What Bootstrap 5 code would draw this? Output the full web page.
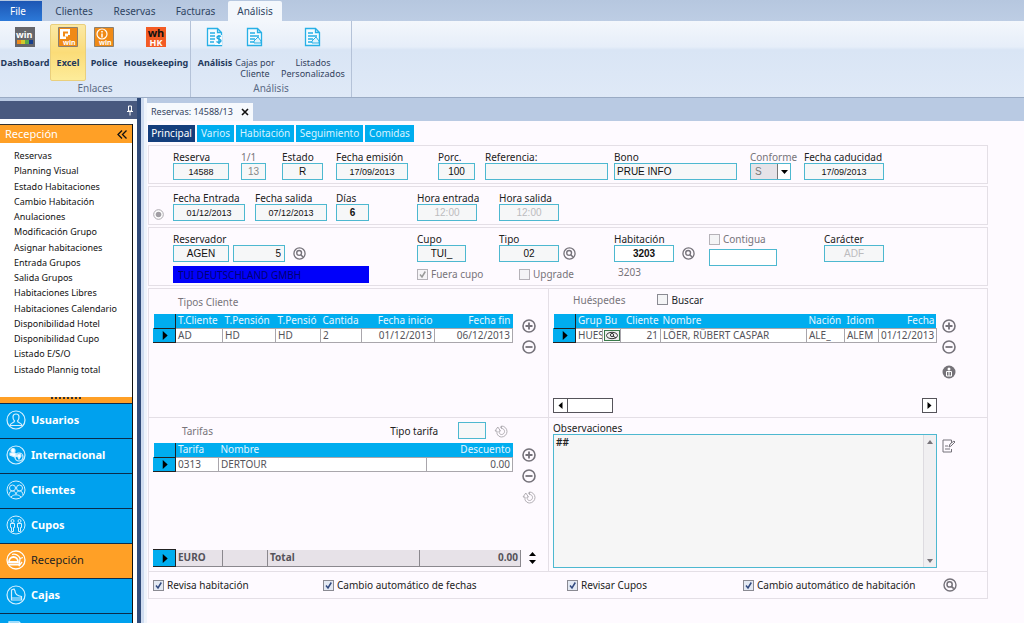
<!DOCTYPE html>
<html lang="es">
<head>
<meta charset="utf-8">
<meta name="viewport" content="width=device-width, initial-scale=1">
<title>Reservas: 14588/13</title>
<link href="https://cdn.jsdelivr.net/npm/bootstrap@5.3.0/dist/css/bootstrap.min.css" rel="stylesheet">
<style>
:root{--ui:"Noto Sans","Open Sans",sans-serif;--cyan:#00adef;--line:#e4dfe6;--edge:#4db8d0}
body{font:10px/12px var(--ui);color:#222;background:#fefaff;height:100vh;overflow:hidden}
button,input,select,textarea{font-family:inherit;border-radius:0}
svg{display:block;flex:none}
/* ribbon */
.menu-strip{background:linear-gradient(#b6c7df,#bdcde4);height:21px;padding-top:1px;flex:none}
.menu-strip .nav-link{padding:0;height:20px;line-height:21px;color:#2f4563;text-align:center;border-radius:0}
.menu-strip .nav-link.file{background:linear-gradient(#1d56b4,#2c79d8);color:#fff;width:42px;padding-right:6px}
.menu-strip .nav-link.active{background:#f3f7fc;border-radius:2px 2px 0 0}
.w-cli{width:64px}.w-res{width:57px}.w-fac{width:65px}.w-ana{width:54px}
.ribbon{background:linear-gradient(#f3f7fc,#e6eef9 34%,#d9e5f5 38%,#dfe9f7);border-bottom:1px solid #9aabc4;height:77px;flex:none}
.rgroup{border-right:1px solid #b4c2d8;padding-top:3px}
.rgroup .cap{color:#5b6b86;height:14px;line-height:14px;text-align:center}
.rbtn{border:1px solid transparent;background:none;padding:2px 0 0;height:57px;color:#33435e;font-size:9px;line-height:11px;white-space:nowrap;display:flex;flex-direction:column;align-items:center;gap:10px}
.rbtn svg{width:20px;height:20px}
.rbtn.strong{font-weight:700;color:#24395b}
.rbtn.hot{background:linear-gradient(#fbe9a5,#fbdc78 50%,#fdec9a);border-color:#e9cf7d;border-radius:2px}
.b36{width:36px}.b40{width:40px}.b50{width:50px}.b68{width:68px}
/* side pane */
.side{width:137px;flex:none;background:#fff}
.side>*{flex:none}
.side-top{background:#48597f;border-top:3px solid #b9cae3;height:21px;padding-right:3px}
.side-in{margin:5px 4px 0 0;border-right:1px solid #111}
.side-head{background:#ffa026;color:#fff;font-size:11px;height:19px;border-top:1px solid #333;padding:0 5px}
.side-head button{border:0;background:none;padding:0}
.links{height:254px;padding:5px 0 20px 14px;font-size:9px;flex-wrap:nowrap}
.links a{color:#111;text-decoration:none;flex:1;line-height:15px}
.grip{height:6px;background:#ffa026;display:flex;justify-content:center;align-items:flex-start}
.grip i{width:30px;height:2px;background:repeating-linear-gradient(90deg,#333 0 2px,#ffa026 2px 4px)}
.mod{border:0;border-top:1px solid #0b2c4c;background:#00a1ee;color:#fff;font-weight:700;font-size:11px;text-align:left;height:35px;width:100%;padding:0 0 2px 6px;display:flex;align-items:center;gap:5px}
.mod.sel{background:#ffa026;color:#222;font-weight:400}
.split{width:10px;flex:none;background:linear-gradient(90deg,#304a78 0 4px,#cfdcf0 4px 7px,#eff4fb 7px)}
/* document */
.doc-strip{background:#b9cae3;height:23px;padding-top:5px}
.doc-tab{background:#f6f9fd;height:18px;width:106px;padding:0 4px;color:#33435e;font-size:9px}
.doc-tab button{border:0;background:none;padding:0}
.page{background:#fefaff}
.ptabs{gap:2px;padding:4px 0 3px}
.ptabs .nav-link{background:var(--cyan);color:#d9f3ff;padding:0;height:17px;line-height:17px;border-radius:0;text-align:center}
.ptabs .nav-link.active{background:#143e7c;color:#fff}
.t1{width:47px}.t2{width:37px}.t3{width:58px}.t4{width:67px}.t5{width:49px}
.form-wrap{margin-right:36px;padding-left:1px}
.pane{border:1px solid var(--line);margin-bottom:2px;display:grid}
.pane label,.pane .lab{white-space:nowrap;display:block;line-height:12px;height:12px}
.pane .dim{color:#77747a}
.row-a{grid-template-columns:24fr 68fr 41fr 54fr 102fr 47fr 129fr 136fr 54fr 183fr;height:39px;padding-top:5px}
.row-b{grid-template-columns:24fr 82fr 81fr 81fr 82fr 488fr;height:39px;padding-top:5px}
.row-c{grid-template-columns:24fr 244fr 82fr 115fr 95fr 115fr 163fr;height:59px;padding-top:5px}
.pane>*{min-width:0}
.box{display:block;height:17px;border:1px solid var(--edge);background:#f6f7f8;color:#111;font:10px/14px "Liberation Sans",Arial,sans-serif;padding:0 2px;text-align:center}
.box.date{font-size:9px}
.box.num{text-align:right;padding-right:3px}
.box.txt{text-align:left}
.box.off{color:#bcbcbe}.box.mid{color:#888}
.box.white{background:#fff}
.f25{width:25px}.f33{width:33px}.f41{width:41px}.f49{width:49px}.f52{width:52px}.f56{width:56px}.f60{width:60px}.f72{width:72px}.f80{width:80px}.f125{width:123px}.f28{width:28px}.f37{width:37px}.f68{width:68px}
select.box{appearance:none;text-align:left;padding-left:4px;color:#777;background:#e6e3e8}
.combo{position:relative;width:41px}
.combo select{width:41px}
.combo span{position:absolute;right:1px;top:1px;width:13px;height:15px;background:#fff;border-left:1px solid #777;display:flex;align-items:center;justify-content:center;pointer-events:none}
.who{background:#0000fa;color:#000073;width:196px;height:17px;border:0;padding:0 5px;margin-top:4px;font-size:10px;line-height:14px;display:block}
.ib{border:0;background:none;padding:0;color:#75727a;line-height:0}
.ib.faint{color:#a9a6ac}
input[type=checkbox]{appearance:none;width:11px;height:11px;border:1px solid #8a8a92;background:#f4f4f6;margin:0;flex:none}
input[type=checkbox]:checked{background:#e3e9f3 url("data:image/svg+xml,%3Csvg xmlns='http://www.w3.org/2000/svg' viewBox='0 0 9 9'%3E%3Cpath d='M2 4.5 4 7 7.3 1.5' fill='none' stroke='%23324a80' stroke-width='1.5'/%3E%3C/svg%3E")}
input[type=checkbox]:disabled{border-color:#b5b2b8}
input[type=checkbox]:disabled:checked{background:#f6f4f7 url("data:image/svg+xml,%3Csvg xmlns='http://www.w3.org/2000/svg' viewBox='0 0 9 9'%3E%3Cpath d='M2 4.5 4 7 7.3 1.5' fill='none' stroke='%23999999' stroke-width='1.5'/%3E%3C/svg%3E")}
.ck,.pane .ck{display:flex;align-items:center;gap:3px}
/* grids */
.duo{display:grid;grid-template-columns:400fr 440fr;border:1px solid var(--line);border-bottom:0}
.duo>*{min-width:0}
.duo>*+*{border-left:1px solid var(--line)}
.duo .dim{color:#77747a}
.upper{height:129px}.lower{height:154px}
.head-line{height:25px;padding-left:25px}
.gridt{table-layout:fixed;width:100%;margin:0;border-collapse:collapse;color:#55535a}
.gridt th{background:var(--cyan);color:#e4f6ff;font-weight:400}
.gridt th,.gridt td{padding:0 2px;height:14px;line-height:13px;white-space:nowrap;overflow:hidden}
.gridt td{border:1px solid #a9a6ac;background:#fff}
.gridt tr>:first-child{background:var(--cyan);border-right:1px solid #222;padding:0}
.gridt td:first-child{border:1px solid #222;border-left-color:var(--cyan)}
.gridt .r{text-align:right}
.gridt td svg{margin:auto}
.side-btns{width:35px;flex:none;display:flex;flex-direction:column;align-items:center;gap:7px;padding:5px 4px 0 0}
.right-btns{width:50px;align-items:flex-start;padding-left:5px}
.g1 th:nth-child(1){width:22px}.g1 th:nth-child(2){width:47px}.g1 th:nth-child(3){width:53px}.g1 th:nth-child(4){width:45px}.g1 th:nth-child(5){width:41px}.g1 th:nth-child(6){width:73px}
.g2 th:nth-child(1){width:22px}.g2 th:nth-child(2){width:27px}.g2 th:nth-child(3){width:18px}.g2 th:nth-child(4){width:40px}.g2 th:nth-child(6){width:38px}.g2 th:nth-child(7){width:34px}.g2 th:nth-child(8){width:58px}
.g3 th:nth-child(1){width:22px}.g3 th:nth-child(2){width:43px}.g3 th:nth-child(4){width:86px}
.g4 td:nth-child(1){width:22px}.g4 td:nth-child(2){width:47px}.g4 td:nth-child(3){width:45px}.g4 td:nth-child(5){width:101px}
.g4 td{background:#e7e2e8;font-weight:700;height:17px;border-width:0 1px 1px 0;border-color:#8b888e}
.sb{display:flex;justify-content:space-between;height:15px;margin-bottom:-2px}
.sb button,.sb i{border:1px solid #55535a;background:#fff;height:15px;padding:0;display:flex;align-items:center;justify-content:center}
.sb button{width:15px}.sb i{width:45px;border-left:0}
.obs{position:relative;flex:1}
.obs textarea{display:block;width:100%;height:134px;border:1px solid var(--edge);background:#f6f6f6;resize:none;padding:1px 2px;line-height:13px;font-weight:600;color:#222;overflow:hidden}
.obs .bar{position:absolute;right:1px;top:1px;bottom:1px;width:13px;background:#f0eff1;border-left:1px solid #dddbe0;display:flex;flex-direction:column;justify-content:space-between;align-items:center;padding:5px 0 4px}
.foot{grid-template-columns:170fr 244fr 176fr 200fr 44fr;height:28px;padding-left:4px;align-items:center}
</style>
</head>
<body class="d-flex flex-column">
<svg width="0" height="0" class="position-absolute" aria-hidden="true">
 <symbol id="plus" viewBox="0 0 14 14"><circle cx="7" cy="7" r="6" fill="none" stroke="currentColor" stroke-width="1.6"/><path d="M3.500 7h7M7 3.500v7" stroke="currentColor" stroke-width="1.800"/></symbol>
 <symbol id="minus" viewBox="0 0 14 14"><circle cx="7" cy="7" r="6" fill="none" stroke="currentColor" stroke-width="1.600"/><path d="M3.500 7h7" stroke="currentColor" stroke-width="1.800"/></symbol>
 <symbol id="look" viewBox="0 0 14 14"><circle cx="7" cy="7" r="6" fill="none" stroke="currentColor" stroke-width="1.400"/><circle cx="6.600" cy="6.400" r="2.600" fill="none" stroke="currentColor" stroke-width="1.500"/><path d="m8.400 8.300 2.400 2.400" stroke="currentColor" stroke-width="1.700"/></symbol>
 <symbol id="cycle" viewBox="0 0 14 14"><path d="M3 7v2.500c.5 2 2.500 3.500 4.500 3.500 3 0 5.500-2.500 5.500-5.500S10.500 2 7.500 2v2.500c2 0 3 1.300 3 3s-1.300 3-3 3S5 9 5 7h1.500L3.800 3 1 7h2M7.500 2l-1 1.200 1 1.300" fill="none" stroke="currentColor" stroke-width=".9"/></symbol>
 <symbol id="tri" viewBox="0 0 8 10"><path d="M1.500 0v10L7 5z" fill="#000"/></symbol>
 <symbol id="report" viewBox="0 0 20 20"><path d="M2.500 1.500h10l4 4v13h-14zM12.500 1.500v4h4" fill="#f4fbff" stroke="#27b0e6" stroke-width="1.300"/><path d="M5 6h5M5 9h9M5 12h5M5 15h4" stroke="#27b0e6" stroke-width="1.300"/></symbol>
</svg>

<nav class="menu-strip nav flex-nowrap">
 <a class="nav-link file" href="#">File</a><a class="nav-link w-cli" href="#">Clientes</a><a class="nav-link w-res" href="#">Reservas</a><a class="nav-link w-fac" href="#">Facturas</a><a class="nav-link w-ana active" href="#">Análisis</a>
</nav>

<header class="ribbon d-flex">
 <section class="rgroup">
  <div class="d-flex">
   <button class="rbtn strong b50"><svg viewBox="0 0 20 20"><path fill="#65666b" d="M0 0h20v20H0z"/><text x="1" y="11" font-size="9" font-weight="700" fill="#fff" font-family="Noto Sans">win</text><path fill="#ef8a1c" d="M2 13h4v4H2z"/><path fill="#d4c92d" d="M6 13h4v4H6z"/><path fill="#5cab49" d="M10 13h4v4h-4z"/><path fill="#173f8c" d="M14 13h4v4h-4z"/></svg>DashBoard</button>
   <button class="rbtn strong hot b36"><svg viewBox="0 0 20 20"><path fill="#f08a16" stroke="#8b8070" d="M.5.500h19v19H.5z"/><path fill="#fff" d="M2 2h10v6h-2V4.500H5v5h3V12H2z"/><path fill="#fff" d="M7 6.500h3v3H7z"/><text x="5" y="18" font-size="7" font-weight="700" fill="#fff" font-family="Noto Sans">win</text></svg>Excel</button>
   <button class="rbtn strong b36"><svg viewBox="0 0 20 20"><path fill="#f08a16" stroke="#8b8070" d="M.5.500h19v19H.5z"/><circle cx="8" cy="7" r="5" fill="none" stroke="#fff" stroke-width="1.200"/><path d="M8 6.500v4M8 4v1.500" stroke="#fff" stroke-width="1.500"/><text x="5" y="18" font-size="7" font-weight="700" fill="#fff" font-family="Noto Sans">win</text></svg>Police</button>
   <button class="rbtn strong b68"><svg viewBox="0 0 20 20"><path fill="#f35b24" d="M0 0h20v20H0z"/><text x="10" y="10" font-size="11" font-weight="700" text-anchor="middle" fill="#111" font-family="Noto Sans">wh</text><text x="10" y="18.500" font-size="9" text-anchor="middle" fill="#fff" font-family="Noto Sans">HK</text></svg>Housekeeping</button>
  </div>
  <div class="cap">Enlaces</div>
 </section>
 <section class="rgroup px-1">
  <div class="d-flex">
   <button class="rbtn strong b40"><svg viewBox="0 0 20 20"><use href="#report"/><path fill="#f4fbff" d="M10 8h7v10h-7z"/><path d="M16 9.500c-1-1-4-.8-4 1s4 1.500 4 3.200-3 2-4.500.8M14 8v9" fill="none" stroke="#1ba6df" stroke-width="1.400"/></svg>Análisis</button>
   <button class="rbtn b40"><svg viewBox="0 0 20 20"><use href="#report"/><path d="M9 16v-2l4-4 3 4v2z" fill="#dff3fc" stroke="#27b0e6"/></svg><span>Cajas por<br>Cliente</span></button>
   <button class="rbtn b68 ms-1"><svg viewBox="0 0 20 20"><use href="#report"/><path d="M9 16v-2l4-4 3 4v2z" fill="#dff3fc" stroke="#27b0e6"/></svg><span>Listados<br>Personalizados</span></button>
  </div>
  <div class="cap">Análisis</div>
 </section>
</header>

<div class="d-flex flex-fill overflow-hidden">
 <aside class="side d-flex flex-column">
  <div class="side-top d-flex justify-content-end align-items-center"><svg width="8" height="11" viewBox="0 0 8 11"><path d="M2.500 1h3v5h-3zM1 6.500h6M4 7v3.500" fill="none" stroke="#fff"/></svg></div>
  <div class="side-in">
   <div class="side-head d-flex justify-content-between align-items-center"><span>Recepción</span><button aria-label="Contraer"><svg width="10" height="9" viewBox="0 0 10 9"><path d="M5 .5 1 4.500l4 4M9.500.500l-4 4 4 4" fill="none" stroke="#111" stroke-width="1.300"/></svg></button></div>
   <nav class="links d-flex flex-column">
    <a href="#">Reservas</a><a href="#">Planning Visual</a><a href="#">Estado Habitaciones</a><a href="#">Cambio Habitación</a><a href="#">Anulaciones</a><a href="#">Modificación Grupo</a><a href="#">Asignar habitaciones</a><a href="#">Entrada Grupos</a><a href="#">Salida Grupos</a><a href="#">Habitaciones Libres</a><a href="#">Habitaciones Calendario</a><a href="#">Disponibilidad Hotel</a><a href="#">Disponibilidad Cupo</a><a href="#">Listado E/S/O</a><a href="#">Listado Plannig total</a>
   </nav>
   <div class="grip"><i></i></div>
   <button class="mod"><svg width="20" height="20" viewBox="0 0 20 20" fill="none" stroke="#d5f0ff" stroke-width="1.200"><circle cx="10" cy="10" r="9"/><path d="M8.500 11c-2-2-2.500-7 1.500-7s3.500 5 1.500 7c0 2 4 1.500 4.500 4.500H4c.5-3 4.500-2.500 4.500-4.500z"/></svg>Usuarios</button>
   <button class="mod"><svg width="20" height="20" viewBox="0 0 20 20" fill="none" stroke="#d5f0ff" stroke-width="1.200"><circle cx="10" cy="10" r="9"/><circle cx="7" cy="5.500" r="2" fill="#fff"/><path fill="#fff" d="M4 8h5l2 3-2 1-5-2z"/><circle cx="13" cy="12" r="4"/><path fill="#fff" d="m11 10 3-1 1 2-2 3z"/></svg>Internacional</button>
   <button class="mod"><svg width="20" height="20" viewBox="0 0 20 20" fill="none" stroke="#d5f0ff"><circle cx="10" cy="10" r="9"/><circle cx="6.500" cy="8" r="3"/><circle cx="13.500" cy="8" r="3"/><path d="M3 15c0-3 2-4 3.500-4s3 1 3.500 3c.5-2 2-3 3.500-3s3.500 1 3.500 4M5 17c3-3 7-3 10 0"/></svg>Clientes</button>
   <button class="mod"><svg width="20" height="20" viewBox="0 0 20 20" fill="none" stroke="#d5f0ff"><circle cx="10" cy="10" r="9"/><circle cx="6.500" cy="6" r="1.500"/><circle cx="13.500" cy="6" r="1.500"/><path d="M4.500 8.500h4v4h-1v4h-2v-4h-1zM11.500 8.500h4v4h-1v4h-2v-4h-1z"/></svg>Cupos</button>
   <button class="mod sel"><svg width="20" height="20" viewBox="0 0 20 20" fill="none" stroke="#fff" stroke-width="1.300"><circle cx="10" cy="10" r="9"/><path d="M3 12c0-3 2-5 4.500-5S12 9 12 12zM3 14.500h10" stroke-width="1.800"/><path d="M6 4.500c3-1 7 .5 8 4l3-1M14 9l-1 7 3-4"/></svg>Recepción</button>
   <button class="mod"><svg width="20" height="20" viewBox="0 0 20 20" fill="none" stroke="#d5f0ff" stroke-width="1.200"><circle cx="10" cy="10" r="9"/><path d="M5.500 5 8 4l1 2c0 3 3 5 6.500 5.500V15h-10zM5 13h10"/></svg>Cajas</button>
   <button class="mod" aria-label="Informes"><svg width="20" height="20" viewBox="0 0 20 20" fill="none" stroke="#d5f0ff" stroke-width="1.300"><path d="M3 2h10l4 4v12H3zM6 6h5M6 9h8"/></svg></button>
  </div>
 </aside>
 <div class="split"></div>

 <main class="flex-fill page">
  <div class="doc-strip d-flex"><div class="doc-tab d-flex align-items-center justify-content-between"><span>Reservas: 14588/13</span><button aria-label="Cerrar"><svg width="8" height="8" viewBox="0 0 8 8"><path d="m1 1 6 6M7 1 1 7" stroke="#111" stroke-width="1.600"/></svg></button></div></div>
  <div class="form-wrap">
  <nav class="ptabs nav flex-nowrap"><a class="nav-link t1 active" href="#">Principal</a><a class="nav-link t2" href="#">Varios</a><a class="nav-link t3" href="#">Habitación</a><a class="nav-link t4" href="#">Seguimiento</a><a class="nav-link t5" href="#">Comidas</a></nav>

  <section class="pane row-a">
   <span></span>
   <div><label for="a1">Reserva</label><input id="a1" class="box date f56" value="14588"></div>
   <div><label for="a2" class="dim">1/1</label><input id="a2" class="box mid f25" value="13"></div>
   <div><label for="a3">Estado</label><input id="a3" class="box f41" value="R"></div>
   <div><label for="a4">Fecha emisión</label><input id="a4" class="box date f72" value="17/09/2013"></div>
   <div><label for="a5">Porc.</label><input id="a5" class="box f37" value="100"></div>
   <div><label for="a6">Referencia:</label><input id="a6" class="box txt f125"></div>
   <div><label for="a7">Bono</label><input id="a7" class="box txt f125" value="PRUE INFO"></div>
   <div><label for="a8" class="dim">Conforme</label><div class="combo"><select id="a8" class="box"><option>S</option></select><span><svg width="7" height="4" viewBox="0 0 7 4"><path d="M0 0h7L3.500 4z"/></svg></span></div></div>
   <div><label for="a9">Fecha caducidad</label><input id="a9" class="box date f80" value="17/09/2013"></div>
  </section>

  <section class="pane row-b">
   <div class="d-flex justify-content-start align-items-end ps-1 pb-1"><svg width="11" height="11" viewBox="0 0 11 11"><circle cx="5.500" cy="5.500" r="4.800" fill="#fff" stroke="#aaa7ad"/><circle cx="5.500" cy="5.500" r="2.800" fill="#a19ea4"/></svg></div>
   <div><label for="b1">Fecha Entrada</label><input id="b1" class="box date f72" value="01/12/2013"></div>
   <div><label for="b2">Fecha salida</label><input id="b2" class="box date f72" value="07/12/2013"></div>
   <div><label for="b3">Días</label><input id="b3" class="box f33 fw-bold" value="6"></div>
   <div><label for="b4">Hora entrada</label><input id="b4" class="box off f60" value="12:00"></div>
   <div><label for="b5">Hora salida</label><input id="b5" class="box off f60" value="12:00"></div>
  </section>

  <section class="pane row-c">
   <span></span>
   <div><label for="c1">Reservador</label><div class="d-flex align-items-center gap-1"><input id="c1" class="box f56" value="AGEN"><input aria-label="Código" class="box num f52" value="5"><button class="ib ms-1" aria-label="Buscar reservador"><svg width="13" height="13"><use href="#look"/></svg></button></div><input class="who" aria-label="Nombre reservador" value="TUI DEUTSCHLAND GMBH"></div>
   <div><label for="c2">Cupo</label><input id="c2" class="box f49" value="TUI_"><label class="ck dim mt-1 pt-1"><input type="checkbox" checked disabled>Fuera cupo</label></div>
   <div><label for="c3">Tipo</label><div class="d-flex align-items-center gap-1"><input id="c3" class="box f60" value="02"><button class="ib" aria-label="Buscar tipo"><svg width="13" height="13"><use href="#look"/></svg></button></div><label class="ck dim mt-1 pt-1 ms-3 ps-1"><input type="checkbox" disabled>Upgrade</label></div>
   <div><label for="c4">Habitación</label><div class="d-flex align-items-center gap-1"><input id="c4" class="box white fw-bold f60" value="3203"><button class="ib ms-1" aria-label="Buscar habitación"><svg width="13" height="13"><use href="#look"/></svg></button></div><div class="lab dim mt-1 ps-1">3203</div></div>
   <div><label class="ck dim mb-1"><input type="checkbox" disabled>Contigua</label><input aria-label="Habitación contigua" class="box white f68"></div>
   <div><label for="c5">Carácter</label><input id="c5" class="box off f60" value="ADF"></div>
  </section>

  <div class="duo upper">
   <section class="ps-1">
    <div class="head-line dim d-flex align-items-center">Tipos Cliente</div>
    <div class="d-flex">
     <div class="flex-fill"><table class="gridt g1">
      <thead><tr><th></th><th>T.Cliente</th><th>T.Pensión</th><th>T.Pensió</th><th>Cantida</th><th class="r">Fecha inicio</th><th class="r">Fecha fin</th></tr></thead>
      <tbody><tr><td><svg width="8" height="9"><use href="#tri"/></svg></td><td>AD</td><td>HD</td><td>HD</td><td>2</td><td class="r">01/12/2013</td><td class="r">06/12/2013</td></tr></tbody></table></div>
     <div class="side-btns"><button class="ib" aria-label="Añadir"><svg width="14" height="14"><use href="#plus"/></svg></button><button class="ib" aria-label="Quitar"><svg width="14" height="14"><use href="#minus"/></svg></button></div>
    </div>
   </section>
   <section class="ps-1">
    <div class="head-line dim d-flex align-items-center ps-3 pb-1"><span class="mx-1 pe-4">Huéspedes</span><label class="ck text-dark ms-1"><input type="checkbox">Buscar</label></div>
    <div class="d-flex">
     <div class="flex-fill d-flex flex-column justify-content-between"><table class="gridt g2">
      <thead><tr><th></th><th>Grup</th><th>Bu</th><th class="r">Cliente</th><th>Nombre</th><th>Nación</th><th>Idiom</th><th class="r">Fecha</th></tr></thead>
      <tbody><tr><td><svg width="8" height="9"><use href="#tri"/></svg></td><td>HUES</td><td class="p-0"><svg width="16" height="11" viewBox="0 0 16 11"><rect x=".5" y=".5" width="15" height="10" fill="#eee" stroke="#3a7a4a"/><ellipse cx="8" cy="5.500" rx="5.500" ry="3.200" fill="none" stroke="#333"/><circle cx="8" cy="5" r="1.600" fill="none" stroke="#333"/><path d="m9 6 3 2" stroke="#333"/></svg></td><td class="r">21</td><td>LÖER, RÜBERT CASPAR</td><td>ALE_</td><td>ALEM</td><td class="r">01/12/2013</td></tr></tbody></table>
      <div class="sb"><div class="d-flex"><button aria-label="Izquierda"><svg width="5" height="7" viewBox="0 0 5 7"><path d="M4.500 0v7L.5 3.500z"/></svg></button><i></i></div><button aria-label="Derecha"><svg width="5" height="7" viewBox="0 0 5 7"><path d="M.5 0v7l4-3.500z"/></svg></button></div></div>
     <div class="side-btns right-btns pb-4"><button class="ib" aria-label="Añadir"><svg width="14" height="14"><use href="#plus"/></svg></button><button class="ib" aria-label="Quitar"><svg width="14" height="14"><use href="#minus"/></svg></button><button class="ib mt-1 mb-2" aria-label="Ficha"><svg width="14" height="14" viewBox="0 0 14 14"><circle cx="7" cy="7" r="6.500" fill="#757278"/><circle cx="7" cy="4" r="1.500" fill="#fff"/><path d="M4.500 6.500h5v4.500h-5zM7 6v5" fill="none" stroke="#fff"/></svg></button></div>
    </div>
   </section>
  </div>

  <div class="duo lower">
   <section class="ps-1 d-flex flex-column">
    <div class="head-line d-flex align-items-center"><span class="dim flex-fill ps-1">Tarifas</span><label for="tt" class="me-3 pe-1">Tipo tarifa</label><input id="tt" class="box f28"><button class="ib faint ms-2 me-4 pe-3" aria-label="Recalcular"><svg width="14" height="14"><use href="#cycle"/></svg></button></div>
    <div class="d-flex flex-fill">
     <div class="flex-fill"><table class="gridt g3">
      <thead><tr><th></th><th>Tarifa</th><th>Nombre</th><th class="r">Descuento</th></tr></thead>
      <tbody><tr><td><svg width="8" height="9"><use href="#tri"/></svg></td><td>0313</td><td>DERTOUR</td><td class="r">0.00</td></tr></tbody></table></div>
     <div class="side-btns"><button class="ib" aria-label="Añadir"><svg width="14" height="14"><use href="#plus"/></svg></button><button class="ib" aria-label="Quitar"><svg width="14" height="14"><use href="#minus"/></svg></button><button class="ib faint" aria-label="Actualizar"><svg width="14" height="14"><use href="#cycle"/></svg></button></div>
    </div>
    <div class="d-flex pb-1"><div class="flex-fill"><table class="gridt g4"><tbody><tr><td><svg width="8" height="9"><use href="#tri"/></svg></td><td>EURO</td><td></td><td>Total</td><td class="r">0.00</td></tr></tbody></table></div>
     <div class="d-flex flex-column align-items-center justify-content-center gap-1 px-2 me-1"><svg width="7" height="4" viewBox="0 0 7 4"><path d="M0 4h7L3.500 0z"/></svg><svg width="7" height="4" viewBox="0 0 7 4"><path d="M0 0h7L3.500 4z"/></svg></div></div>
   </section>
   <section class="ps-1 pt-1">
    <label for="ob">Observaciones</label>
    <div class="d-flex"><div class="obs"><textarea id="ob">##</textarea><div class="bar"><svg width="6" height="4" viewBox="0 0 6 4"><path d="M0 4h6L3 0z" fill="#77747a"/></svg><svg width="6" height="4" viewBox="0 0 6 4"><path d="M0 0h6L3 4z" fill="#77747a"/></svg></div></div>
     <div class="side-btns right-btns"><button class="ib" aria-label="Editar"><svg width="14" height="14" viewBox="0 0 14 14"><path d="M9.500 4V1H1v12h8.500v-3M3 7h3M3 10h5M7 8l1-3 4-3 1 1-4 4z" fill="none" stroke="currentColor"/></svg></button></div></div>
   </section>
  </div>

  <section class="pane foot">
   <label class="ck"><input type="checkbox" checked>Revisa habitación</label>
   <label class="ck"><input type="checkbox" checked>Cambio automático de fechas</label>
   <label class="ck"><input type="checkbox" checked>Revisar Cupos</label>
   <label class="ck"><input type="checkbox" checked>Cambio automático de habitación</label>
   <button class="ib text-start" aria-label="Buscar"><svg width="14" height="14"><use href="#look"/></svg></button>
  </section>
  </div>
 </main>
</div>
<script src="https://cdn.jsdelivr.net/npm/bootstrap@5.3.0/dist/js/bootstrap.bundle.min.js"></script>
</body>
</html>
